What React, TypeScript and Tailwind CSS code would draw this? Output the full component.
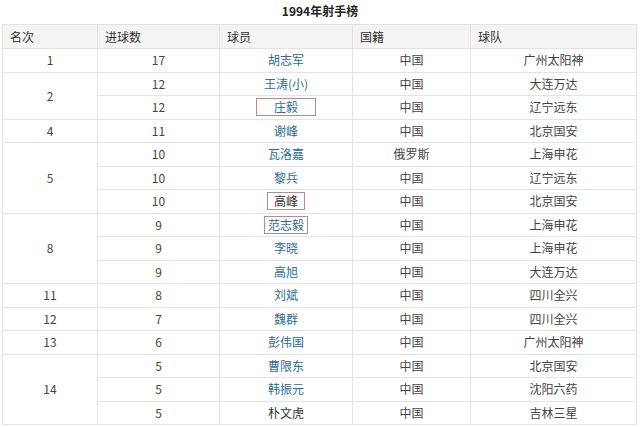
import type { FC } from "react";

interface IRow {
    rank?: string,
    span?: number,
    goals: string,
    name: string,
    link: boolean,
    box?: string,
    nation: string,
    team: string
}

const rows: IRow[] = [
    {rank: "1", span: 1, goals: "17", name: "胡志军", link: true, nation: "中国", team: "广州太阳神"},
    {rank: "2", span: 2, goals: "12", name: "王涛(小)", link: true, nation: "中国", team: "大连万达"},
    {goals: "12", name: "庄毅", link: true, box: "px-[17px]", nation: "中国", team: "辽宁远东"},
    {rank: "4", span: 1, goals: "11", name: "谢峰", link: true, nation: "中国", team: "北京国安"},
    {rank: "5", span: 3, goals: "10", name: "瓦洛嘉", link: true, nation: "俄罗斯", team: "上海申花"},
    {goals: "10", name: "黎兵", link: true, nation: "中国", team: "辽宁远东"},
    {goals: "10", name: "高峰", link: false, box: "px-[6px]", nation: "中国", team: "北京国安"},
    {rank: "8", span: 3, goals: "9", name: "范志毅", link: true, box: "px-[3px]", nation: "中国", team: "上海申花"},
    {goals: "9", name: "李晓", link: true, nation: "中国", team: "上海申花"},
    {goals: "9", name: "高旭", link: true, nation: "中国", team: "大连万达"},
    {rank: "11", span: 1, goals: "8", name: "刘斌", link: true, nation: "中国", team: "四川全兴"},
    {rank: "12", span: 1, goals: "7", name: "魏群", link: true, nation: "中国", team: "四川全兴"},
    {rank: "13", span: 1, goals: "6", name: "彭伟国", link: true, nation: "中国", team: "广州太阳神"},
    {rank: "14", span: 3, goals: "5", name: "曹限东", link: true, nation: "中国", team: "北京国安"},
    {goals: "5", name: "韩振元", link: true, nation: "中国", team: "沈阳六药"},
    {goals: "5", name: "朴文虎", link: false, nation: "中国", team: "吉林三星"},
];

const th = "border border-[#e2e2e2] bg-[#f4f4f4] text-left font-normal px-[7px] text-[#333]";
const td = "border border-[#e4e4e4] text-center px-1";

const App: FC = () => {
    return (
        <div className="w-[640px] h-[427px] bg-white overflow-hidden text-[12px] text-[#444] font-['Noto_Sans_CJK_SC',sans-serif]">
            <h1 className="h-[24px] flex items-center justify-center font-bold text-[12px] text-[#222] pb-[3px]">
                1994年射手榜
            </h1>
            <table className="ml-[2px] w-[634px] border-collapse table-fixed">
                <colgroup>
                    <col className="w-[95px]"/>
                    <col className="w-[122px]"/>
                    <col className="w-[133px]"/>
                    <col className="w-[118px]"/>
                    <col className="w-[166px]"/>
                </colgroup>
                <thead>
                <tr className="h-[24px]">
                    <th className={th}>名次</th>
                    <th className={th}>进球数</th>
                    <th className={th}>球员</th>
                    <th className={th}>国籍</th>
                    <th className={th}>球队</th>
                </tr>
                </thead>
                <tbody>
                {rows.map((r, i) => (
                    <tr key={i} className="h-[23.5px]">
                        {r.rank && <td rowSpan={r.span} className={td}>{r.rank}</td>}
                        <td className={td}>{r.goals}</td>
                        <td className={td}>
                            <span
                                className={`${r.link ? "text-[#2e6b95]" : "text-[#333]"} ${r.box ? `inline-block leading-[16px] border border-[#c98585] ${r.box}` : ""}`}
                            >
                                {r.name}
                            </span>
                        </td>
                        <td className={td}>{r.nation}</td>
                        <td className={td}>{r.team}</td>
                    </tr>
                ))}
                </tbody>
            </table>
        </div>
    );
};

export default App;
